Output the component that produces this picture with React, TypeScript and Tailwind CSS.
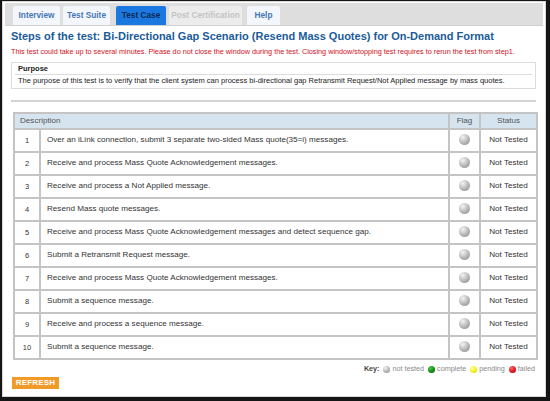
const steps = [
  "Over an iLink connection, submit 3 separate two-sided Mass quote(35=i) messages.",
  "Receive and process Mass Quote Acknowledgement messages.",
  "Receive and process a Not Applied message.",
  "Resend Mass quote messages.",
  "Receive and process Mass Quote Acknowledgement messages and detect sequence gap.",
  "Submit a Retransmit Request message.",
  "Receive and process Mass Quote Acknowledgement messages.",
  "Submit a sequence message.",
  "Receive and process a sequence message.",
  "Submit a sequence message.",
];

const tabs = [
  { label: "Interview", state: "normal", cls: "w-[47px] ml-[3px]" },
  { label: "Test Suite", state: "normal", cls: "w-[47px] ml-[3px]" },
  { label: "Test Case", state: "active", cls: "w-[50px] ml-[6px]" },
  { label: "Post Certification", state: "disabled", cls: "w-[73px] ml-[3px]" },
  { label: "Help", state: "normal", cls: "w-[33px] ml-[5px]" },
];

function Ball({ color, small }: { color: string; small?: boolean }) {
  const grad: Record<string, string> = {
    gray: "bg-[radial-gradient(circle_at_35%_30%,#f4f4f4,#b4b4b4_55%,#8a8a8a)]",
    green: "bg-[radial-gradient(circle_at_35%_30%,#4fc34f,#0a8a0a_60%,#066006)]",
    yellow: "bg-[radial-gradient(circle_at_35%_30%,#ffff9a,#f2ee1a_60%,#c8c000)]",
    red: "bg-[radial-gradient(circle_at_35%_30%,#ff6a6a,#e0101a_60%,#a00010)]",
  };
  return (
    <span
      className={`inline-block rounded-full ${grad[color]} ${small ? "w-[7px] h-[7px]" : "w-[11px] h-[11px]"}`}
    />
  );
}

export default function App() {
  return (
    <div className="w-[550px] h-[401px] bg-[#151515] pl-[2px] pt-[1px] pr-[4px] pb-[4px] font-['Liberation_Sans',Arial,sans-serif]">
      <div className="h-full bg-white border border-[#d8d8d8] flex flex-col overflow-hidden">
        {/* tabs */}
        <div className="mx-[2px] mt-[1px] h-[23px] shrink-0 bg-[#dedede] border-b border-[#d0d0d0] flex items-end pl-[5px]">
          {tabs.map((t) => (
            <div
              key={t.label}
              className={`h-[19px] ${t.cls} flex items-center justify-center text-[8.3px] font-bold rounded-t-[2px] ${
                t.state === "active"
                  ? "bg-[#1b78e0] text-[#0c2a55]"
                  : t.state === "disabled"
                    ? "bg-[#ececec] text-[#c4c4c4]"
                    : "bg-[#f3f6fa] text-[#4677b6]"
              }`}
            >
              {t.label}
            </div>
          ))}
        </div>

        <div className="px-[8px] flex flex-col items-start">
          <h1 className="mt-[3px] text-[11px] leading-[14px] font-bold text-[#1a5b99] whitespace-nowrap">
            Steps of the test: Bi-Directional Gap Scenario (Resend Mass Quotes) for On-Demand Format
          </h1>
          <p className="mt-[4px] text-[7.25px] leading-[10px] text-[#d0101a] whitespace-nowrap">
            This test could take up to several minutes. Please do not close the window during the test. Closing window/stopping test requires to rerun the test from step1.
          </p>

          <div className="self-stretch mt-[5px] mr-[1px] border border-[#dcdcdc] px-[3px] py-[1px]">
            <div className="h-[11px] flex items-center text-[7.5px] font-bold text-[#222] px-[3px] border-b border-[#dcdcdc]">
              Purpose
            </div>
            <div className="h-[12px] flex items-center text-[7.5px] text-[#222] px-[3px] whitespace-nowrap">
              The purpose of this test is to verify that the client system can process bi-directional gap Retransmit Request/Not Applied message by mass quotes.
            </div>
          </div>

          <div className="self-stretch mt-[11px] mr-[1px] h-[2px] bg-[#d4d4d4]" />

          <table className="mt-[10px] ml-[2px] w-[525px] border-2 border-[#c4c4c4] border-collapse text-[8.1px] text-[#333]">
            <thead>
              <tr className="h-[16px] bg-[#d5e4ef] text-[#555]">
                <th colSpan={2} className="text-left font-normal pl-[5px] border-2 border-[#c4c4c4]">
                  Description
                </th>
                <th className="w-[31px] font-normal border-2 border-[#c4c4c4]">Flag</th>
                <th className="w-[57px] font-normal border-2 border-[#c4c4c4]">Status</th>
              </tr>
            </thead>
            <tbody>
              {steps.map((s, i) => (
                <tr key={i} className="h-[23px]">
                  <td className="w-[26px] text-center text-[7.5px] border-2 border-[#c4c4c4]">{i + 1}</td>
                  <td className="pl-[6px] border-2 border-[#c4c4c4]">{s}</td>
                  <td className="text-center border-2 border-[#c4c4c4] leading-none">
                    <Ball color="gray" />
                  </td>
                  <td className="text-center border-2 border-[#c4c4c4]">Not Tested</td>
                </tr>
              ))}
            </tbody>
          </table>

          <div className="self-stretch mt-[4px] mr-[2px] h-[10px] flex justify-end items-center gap-[2px] text-[7.2px] text-[#8a8a8a]">
            <span className="font-bold text-[#444] mr-[2px]">Key:</span>
            <Ball color="gray" small />
            <span className="mr-[2px]">not tested</span>
            <Ball color="green" small />
            <span className="mr-[2px]">complete</span>
            <Ball color="yellow" small />
            <span className="mr-[2px]">pending</span>
            <Ball color="red" small />
            <span>failed</span>
          </div>

          <button className="mt-[3px] ml-[1px] h-[12px] w-[47px] flex items-center justify-center bg-[#f09a28] text-white text-[8px] font-bold leading-none tracking-[0.2px]">
            REFRESH
          </button>
        </div>
      </div>
    </div>
  );
}
